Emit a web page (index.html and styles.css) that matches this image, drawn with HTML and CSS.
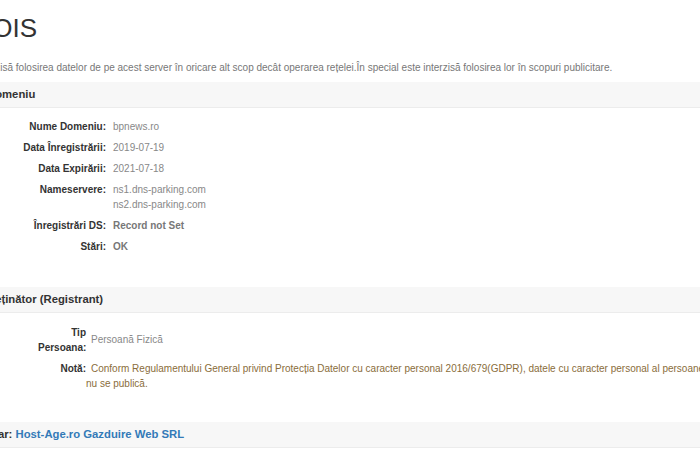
FILE: index.html
```html
<!DOCTYPE html>
<html lang="ro">
<head>
<meta charset="utf-8">
<title>WHOIS</title>
<link rel="stylesheet" href="styles.css">
</head>
<body>
<div class="page">
  <h1 class="title">WHOIS</h1>
  <p class="disclaimer">Este interzisă folosirea datelor de pe acest server în oricare alt scop decât operarea rețelei.În special este interzisă folosirea lor în scopuri publicitare.</p>

  <section class="panel">
    <div class="panel-heading">Domeniu</div>
    <div class="panel-body domain">
      <div class="lbl">Nume Domeniu:</div><div class="val">bpnews.ro</div>
      <div class="lbl">Data Înregistrării:</div><div class="val">2019-07-19</div>
      <div class="lbl">Data Expirării:</div><div class="val">2021-07-18</div>
      <div class="lbl">Nameservere:</div><div class="val">ns1.dns-parking.com<br>ns2.dns-parking.com</div>
      <div class="lbl">Înregistrări DS:</div><div class="val strong">Record not Set</div>
      <div class="lbl">Stări:</div><div class="val strong">OK</div>
    </div>
  </section>

  <section class="panel">
    <div class="panel-heading">Deținător (Registrant)</div>
    <div class="panel-body holder">
      <div class="lbl">Tip Persoana:</div><div class="val mid">Persoană Fizică</div>
      <div class="lbl">Notă:</div><div class="val warn">Conform Regulamentului General privind Protecția Datelor cu caracter personal 2016/679(GDPR), datele cu caracter personal al persoanei fizice nu se publică.</div>
    </div>
  </section>

  <section class="panel">
    <div class="panel-heading registrar">Registrar: <a class="link" href="#">Host-Age.ro Gazduire Web SRL</a></div>
  </section>
</div>
</body>
</html>
```

FILE: styles.css
```css
html, body {
  margin: 0;
  padding: 0;
  background: #fff;
  overflow: hidden;
}
body {
  font-family: "Liberation Sans", Arial, Helvetica, sans-serif;
  font-size: 10px;
  line-height: 15px;
  color: #333;
}
.page {
  margin-left: -60px;
  width: 1000px;
}
.title {
  font-size: 26px;
  line-height: 28.6px;
  font-weight: 400;
  margin: 14px 0 0 9px;
  color: #333;
}
.disclaimer {
  margin: 17px 0 0 13px;
  color: #777;
}
.panel {
  margin-top: 7px;
}
.panel + .panel {
  margin-top: 0;
}
.panel-heading {
  background: #f7f7f7;
  border-bottom: 1px solid #ececec;
  height: 25px;
  line-height: 25px;
  font-size: 11.3px;
  font-weight: 700;
  color: #333;
  padding-left: 47px;
}
.panel-heading.registrar {
  padding-left: 19px;
  margin-top: 31px;
}
.link {
  color: #337ab7;
  text-decoration: none;
}
.panel-body {
  display: grid;
  row-gap: 6px;
}
.domain {
  grid-template-columns: 166px 1fr;
  column-gap: 7px;
  padding: 11px 0 33px 0;
}
.holder {
  grid-template-columns: 146px 1fr;
  padding: 12px 0 0 0;
}
.holder .lbl {
  padding-left: 98px;
}
.holder .val {
  text-indent: 5px;
  width: 650px;
}
.lbl {
  text-align: right;
  font-weight: 700;
  color: #333;
}
.val {
  color: #888;
}
.val.strong {
  font-weight: 700;
  color: #777;
}
.val.mid {
  align-self: center;
}
.val.warn {
  color: #8a6d3b;
}
```
